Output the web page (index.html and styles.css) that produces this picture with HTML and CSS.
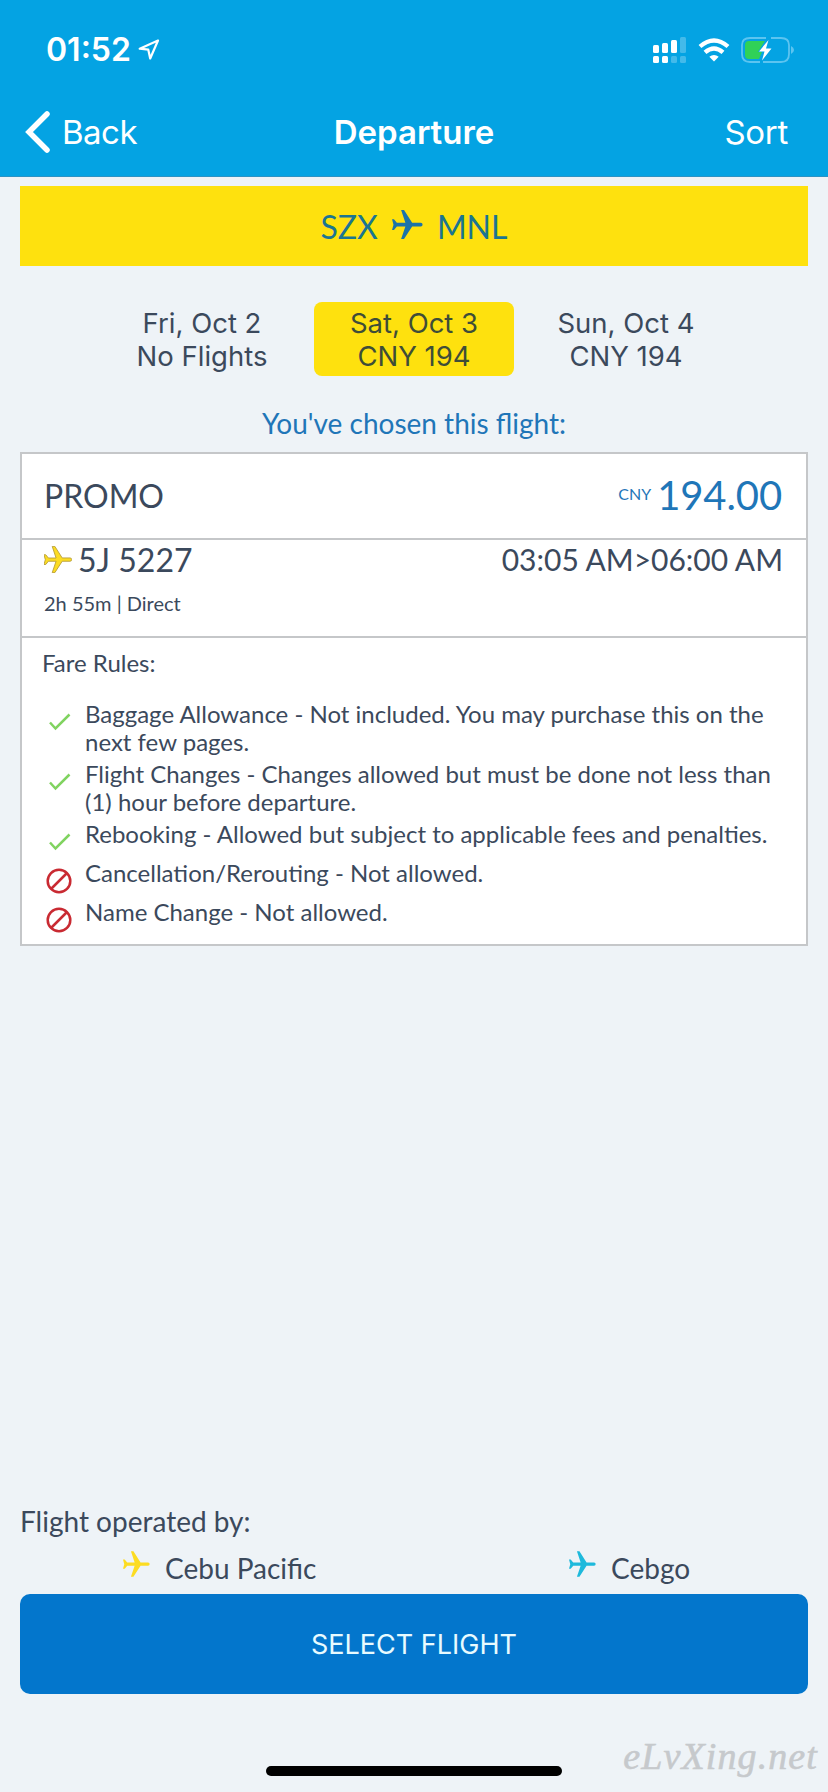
FILE: index.html
```html
<!DOCTYPE html>
<html lang="en">
<head>
<meta charset="utf-8">
<title>Departure</title>
<link rel="stylesheet" href="styles.css">
</head>
<body>
<svg class="defs" aria-hidden="true">
  <symbol id="plane" viewBox="0 0 32 30">
    <path d="M0 9.600h2l3 3.700h8.800L9.400 0h3l8.400 13.200h8.900a1.900 1.900 0 0 1 0 3.800h-8.900L12.400 30h-3l4.400-13H5l-3 3.700H0l1.500-5.500z"/>
  </symbol>
  <symbol id="check" viewBox="0 0 22 18">
    <path d="M1 9.500 6.500 15.500 20.500 1.500" fill="none" stroke="#80d360" stroke-width="2.500"/>
  </symbol>
  <symbol id="ban" viewBox="0 0 26 26">
    <g fill="none" stroke="#c92a32" stroke-width="2.500"><circle cx="13" cy="13" r="11.300"/><path d="M5 21 21 5"/></g>
  </symbol>
</svg>
<div class="screen">
  <header class="header">
    <div class="status">
      <span class="time">01:52</span>
      <svg class="locate" viewBox="0 0 22 22"><path d="M20 1.500 1.700 9.700 10.300 10.700 12.200 19.500z" fill="none" stroke="#fff" stroke-width="2.200" stroke-linejoin="round"/></svg>
      <svg class="signal" viewBox="0 0 34 26" fill="#fff"><rect x="0" y="8" width="6" height="8" rx="1.500"/><rect x="9" y="6" width="6" height="10" rx="1.500"/><rect x="18" y="3" width="6" height="13" rx="1.500"/><rect x="0" y="19" width="6" height="7" rx="1.500"/><rect x="9" y="19" width="6" height="7" rx="1.500"/><g opacity=".25"><rect x="27" y="0" width="6" height="16" rx="1.500"/><rect x="18" y="19" width="6" height="7" rx="1.500"/><rect x="27" y="19" width="6" height="7" rx="1.500"/></g></svg>
      <svg class="wifi" viewBox="0 0 32 24"><g fill="none" stroke="#fff" stroke-width="4.300"><path d="M2 8.500Q16-3.700 30 8.500"/><path d="M7 14.400Q16 6.400 25 14.400"/></g><path d="M16 23.500 11.300 18.800Q16 15 20.700 18.800z" fill="#fff"/></svg>
      <svg class="battery" viewBox="0 0 54 26"><path d="M25 1H9Q1 1 1 8v9q0 8 8 8h10M30 1h10q8 0 8 7v9q0 8-8 8H22" fill="none" stroke="#5cc4f0" stroke-width="1.800"/><path d="M8 4h16l-7 11h4l-3 7H8q-4 0-4-4V8q0-4 4-4z" fill="#30d158"/><path d="M50 9q3 1.500 3 4t-3 4z" fill="#5cc4f0"/><path d="M27.500 3 18 14.500h5.500L21 23.500 30.500 11.500H25z" fill="#fff"/></svg>
    </div>
    <nav class="nav">
      <a class="back"><svg class="chevron" viewBox="0 0 25 42"><path d="M22 3 4 21 22 39" fill="none" stroke="#fff" stroke-width="5.500" stroke-linecap="round"/></svg><span class="back-label">Back</span></a>
      <h1 class="title">Departure</h1>
      <a class="sort">Sort</a>
    </nav>
  </header>
  <main class="content">
    <div class="route"><span class="from">SZX</span><svg class="route-plane"><use href="#plane"/></svg><span class="to">MNL</span></div>
    <div class="dates">
      <div class="date"><span class="d1">Fri, Oct 2</span><span class="d2">No Flights</span></div>
      <div class="date selected"><span class="d1">Sat, Oct 3</span><span class="d2">CNY 194</span></div>
      <div class="date"><span class="d1">Sun, Oct 4</span><span class="d2">CNY 194</span></div>
    </div>
    <p class="chosen">You've chosen this flight:</p>
    <section class="card">
      <div class="fare"><span class="promo">PROMO</span><span class="currency">CNY</span><span class="price">194.00</span></div>
      <div class="flight">
        <div class="flight-row"><svg class="flight-plane"><use href="#plane"/></svg><span class="number">5J 5227</span><span class="times">03:05 AM&gt;06:00 AM</span></div>
        <div class="duration">2h 55m | Direct</div>
      </div>
      <div class="rules">
        <h2 class="rules-title">Fare Rules:</h2>
        <ul class="list">
          <li class="rule"><svg class="check"><use href="#check"/></svg><span>Baggage Allowance - Not included. You may purchase this on the<br>next few pages.</span></li>
          <li class="rule"><svg class="check"><use href="#check"/></svg><span>Flight Changes - Changes allowed but must be done not less than<br>(1) hour before departure.</span></li>
          <li class="rule"><svg class="check"><use href="#check"/></svg><span>Rebooking - Allowed but subject to applicable fees and penalties.</span></li>
          <li class="rule"><svg class="ban"><use href="#ban"/></svg><span>Cancellation/Rerouting - Not allowed.</span></li>
          <li class="rule"><svg class="ban"><use href="#ban"/></svg><span>Name Change - Not allowed.</span></li>
        </ul>
      </div>
    </section>
  </main>
  <footer class="footer">
    <p class="operated">Flight operated by:</p>
    <div class="operators">
      <div class="operator"><svg class="op-plane yellow"><use href="#plane"/></svg><span>Cebu Pacific</span></div>
      <div class="operator cebgo"><svg class="op-plane cyan"><use href="#plane"/></svg><span>Cebgo</span></div>
    </div>
    <button class="select">SELECT FLIGHT</button>
    <div class="home-indicator"></div>
  </footer>
  <div class="watermark">eLvXing.net</div>
</div>
</body>
</html>
```

FILE: styles.css
```css
* { box-sizing: border-box; }
body { margin: 0; background: #eef3f7; color: #3b495c; font-family: Lato, sans-serif; }
h1, h2, p, ul { margin: 0; padding: 0; font-weight: 400; }
svg { display: block; flex: none; }
span, a { white-space: nowrap; }
.defs { display: none; }
.screen { position: relative; width: 828px; height: 1792px; display: flex; flex-direction: column; overflow: hidden; }

.header { height: 177px; background: #04a3e3; border-bottom: 1px solid #2c93c4; color: #fff; font-family: Inter, sans-serif; }
.status { height: 98px; display: flex; align-items: center; padding: 1px 33px 0 46px; }
.time { font-size: 32px; font-weight: 600; width: 92px; }
.locate { width: 22px; height: 22px; margin-right: auto; }
.signal { width: 34px; height: 26px; margin-right: 11px; }
.wifi { width: 32px; height: 24px; margin-right: 11px; }
.battery { width: 54px; height: 26px; }
.nav { height: 68px; display: grid; grid-template-columns: 1fr auto 1fr; align-items: center; padding: 0 40px; font-size: 33px; }
.back { display: flex; align-items: center; gap: 12px; margin-left: -15px; letter-spacing: -0.5px; }
.chevron { width: 25px; height: 42px; }
.title { font-size: 33px; font-weight: 600; }
.sort { text-align: right; letter-spacing: -0.3px; }

.content { padding: 9px 20px 0; flex: 1; }
.route { height: 80px; background: #fee10e; color: #1b7591; display: flex; align-items: center; justify-content: center; font-size: 32px; }
.route-plane { width: 31px; height: 29px; margin: 0 14px 4px; fill: #1b73a8; }
.dates { display: flex; justify-content: center; gap: 12px; margin-top: 36px; font-family: Inter, sans-serif; font-size: 27.5px; line-height: 33px; }
.date { width: 200px; height: 74px; padding-top: 5px; display: flex; flex-direction: column; align-items: center; border-radius: 8px; }
.selected { background: #fee10e; color: #3e4d38; }
.chosen { margin: 30px 0 12px; text-align: center; font-size: 28px; line-height: 34px; color: #1f76b8; }

.card { border: 2px solid #c5c7c9; background: #fff; height: 494px; }
.fare { height: 86px; border-bottom: 2px solid #c5c7c9; display: flex; align-items: center; padding: 0 24px 2px 22px; color: #1f76b8; }
.promo { font-size: 32px; color: #3b495c; margin-right: auto; }
.currency { font-size: 16px; margin: 0 6px 3px 0; }
.price { font-size: 40px; letter-spacing: -0.1px; }
.flight { height: 98px; border-bottom: 2px solid #c5c7c9; padding: 0 23px 0 22px; }
.flight-row { display: flex; align-items: center; height: 39px; }
.flight-plane { width: 28px; height: 27px; margin-right: 6px; fill: #fcdc22; stroke: #b59c38; stroke-width: 1; overflow: visible; }
.number { font-size: 32px; margin-right: auto; }
.times { font-size: 30px; margin-bottom: 2px; }
.duration { font-size: 20px; line-height: 24px; margin-top: 12px; }
.rules { padding: 11px 20px 0; font-size: 24px; line-height: 28px; }
.rules-title { font-size: 24px; margin-bottom: 23px; }
.list { list-style: none; display: flex; flex-direction: column; gap: 4px; }
.rule { display: flex; min-height: 35px; }
.check { width: 22px; height: 18px; margin: 13px 14px 0 7px; }
.ban { width: 26px; height: 26px; margin: 9px 13px 0 4px; }

.footer { height: 284px; padding: 0 20px; font-size: 28px; }
.operated { line-height: 27px; }
.operators { display: grid; grid-template-columns: 446px 1fr; height: 59px; padding-left: 103px; }
.operator { display: flex; gap: 15px; line-height: 34px; padding-top: 16px; }
.op-plane { width: 27px; height: 26px; }
.yellow { fill: #fcdc22; }
.cyan { fill: #1eb9dc; }
.select { display: block; width: 788px; height: 100px; border: 0; border-radius: 10px; background: #0376cc; color: #e8fbff; font: 400 27px Inter, sans-serif; }
.home-indicator { width: 296px; height: 10px; margin: 72px auto 0; border-radius: 5px; background: #000; }
.watermark { position: absolute; right: 10px; top: 1734px; font: italic 38px "Liberation Serif", cursive; letter-spacing: 1.1px; color: #c6c9cc; -webkit-text-stroke: 0.6px #c6c9cc; }
```
